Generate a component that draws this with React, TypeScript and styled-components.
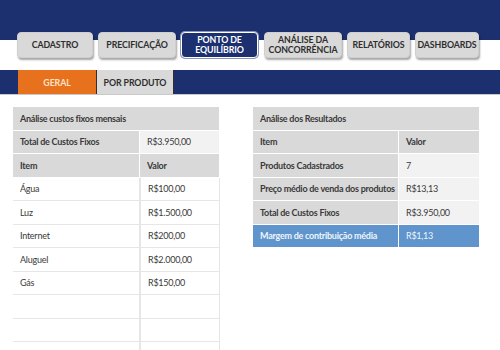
import React from 'react'
import styled, { createGlobalStyle } from 'styled-components'

const GlobalStyle = createGlobalStyle`
  * { box-sizing: border-box; }
  body {
    margin: 0;
    background: #fff;
    font-family: Lato, "Open Sans", "Liberation Sans", sans-serif;
    color: #3a3a3a;
  }
`

const NAVY = '#1c2f6f'

const Header = styled.header`
  height: 70px;
  background: linear-gradient(${NAVY} 0 40px, #fff 40px);
  padding: 32px 0 0 17px;
  display: flex;
  align-items: flex-start;
`

const MenuTab = styled.div<{ $w: number; $gap: number; $active?: boolean }>`
  width: ${p => p.$w}px;
  height: 26px;
  margin-right: ${p => p.$gap}px;
  border-radius: 4px;
  display: flex;
  align-items: center;
  justify-content: center;
  text-align: center;
  white-space: pre-line;
  font-size: 8.8px;
  font-weight: 700;
  letter-spacing: -0.1px;
  line-height: 10.5px;
  color: ${p => (p.$active ? '#fff' : '#2e2e2e')};
  background: ${p => (p.$active ? NAVY : '#d9d9d9')};
  border: 1px solid ${p => (p.$active ? '#fff' : '#cfcfcf')};
  box-shadow: ${p => (p.$active ? '0 0 0 1px #8a96b8' : '1px 2px 2px rgba(0,0,0,0.35)')};
`

const SubBar = styled.nav`
  height: 25px;
  background: ${NAVY};
  border-bottom: 1px solid #c9c9c9;
  padding-left: 18px;
  display: flex;
`

const SubTab = styled.div<{ $w: number; $orange?: boolean }>`
  width: ${p => p.$w}px;
  height: 24px;
  display: flex;
  align-items: center;
  justify-content: center;
  font-size: 8.8px;
  font-weight: 700;
  letter-spacing: -0.1px;
  color: ${p => (p.$orange ? '#fde2c8' : '#2e2e2e')};
  background: ${p => (p.$orange ? '#e8711d' : '#d9d9d9')};
  border-right: 1px solid #3a2a2a;
`

const Content = styled.main`
  display: flex;
  align-items: flex-start;
  padding: 12px 0 0 13px;
  gap: 33px;
`

const Table = styled.div<{ $w: number; $col: number }>`
  width: ${p => p.$w}px;
  display: grid;
  grid-template-columns: ${p => p.$col}px 1fr;
  grid-auto-rows: 23.5px;
  font-size: 9px;
  letter-spacing: -0.25px;
`

type Kind = 'head' | 'label' | 'light' | 'white' | 'blue'

const Cell = styled.div<{ $kind: Kind; $span?: boolean; $plain?: boolean }>`
  grid-column: ${p => (p.$span ? '1 / 3' : 'auto')};
  display: flex;
  align-items: center;
  padding-left: 7px;
  white-space: nowrap;
  font-weight: ${p =>
    !p.$plain && (p.$kind === 'head' || p.$kind === 'label' || p.$kind === 'blue') ? 700 : 400};
  background: ${p =>
    p.$kind === 'head' || p.$kind === 'label'
      ? '#d9d9d9'
      : p.$kind === 'light'
      ? '#f2f2f2'
      : p.$kind === 'blue'
      ? '#5f95cc'
      : '#fff'};
  color: ${p => (p.$kind === 'blue' ? '#eef4fb' : '#3a3a3a')};
  border-bottom: 1px solid ${p => (p.$kind === 'white' ? '#e6e6e6' : '#fff')};
  border-right: 1px solid ${p => (p.$kind === 'white' ? '#e6e6e6' : '#fff')};
  &:nth-child(odd) {
    border-left: ${p => (p.$kind === 'white' ? '1px solid #e6e6e6' : 'none')};
  }
`

const menu = [
  { label: 'CADASTRO', w: 76, gap: 5 },
  { label: 'PRECIFICAÇÃO', w: 78, gap: 5 },
  { label: 'PONTO DE\nEQUILÍBRIO', w: 77, gap: 6, active: true },
  { label: 'ANÁLISE DA\nCONCORRÊNCIA', w: 78, gap: 5 },
  { label: 'RELATÓRIOS', w: 63, gap: 5 },
  { label: 'DASHBOARDS', w: 64, gap: 0 },
]

const costs: [string, string][] = [
  ['Água', 'R$100,00'],
  ['Luz', 'R$1.500,00'],
  ['Internet', 'R$200,00'],
  ['Aluguel', 'R$2.000,00'],
  ['Gás', 'R$150,00'],
  ['', ''],
  ['', ''],
  ['', ''],
]

const results: [string, string][] = [
  ['Produtos Cadastrados', '7'],
  ['Preço médio de venda dos produtos', 'R$13,13'],
  ['Total de Custos Fixos', 'R$3.950,00'],
]

const App = () => {
  return (
    <>
      <GlobalStyle />
      <Header>
        {menu.map(m => (
          <MenuTab key={m.label} $w={m.w} $gap={m.gap} $active={m.active}>
            {m.label}
          </MenuTab>
        ))}
      </Header>
      <SubBar>
        <SubTab $w={79} $orange>GERAL</SubTab>
        <SubTab $w={77}>POR PRODUTO</SubTab>
      </SubBar>
      <Content>
        <Table $w={207} $col={127}>
          <Cell $kind="head" $span>Análise custos fixos mensais</Cell>
          <Cell $kind="label">Total de Custos Fixos</Cell>
          <Cell $kind="light">R$3.950,00</Cell>
          <Cell $kind="label">Item</Cell>
          <Cell $kind="label">Valor</Cell>
          {costs.map(([item, val], i) => (
            <React.Fragment key={i}>
              <Cell $kind="white">{item}</Cell>
              <Cell $kind="white">{val}</Cell>
            </React.Fragment>
          ))}
        </Table>
        <Table $w={227} $col={146}>
          <Cell $kind="head" $span>Análise dos Resultados</Cell>
          <Cell $kind="label">Item</Cell>
          <Cell $kind="label">Valor</Cell>
          {results.map(([item, val]) => (
            <React.Fragment key={item}>
              <Cell $kind="label">{item}</Cell>
              <Cell $kind="light">{val}</Cell>
            </React.Fragment>
          ))}
          <Cell $kind="blue">Margem de contribuição média</Cell>
          <Cell $kind="blue" $plain>R$1,13</Cell>
        </Table>
      </Content>
    </>
  )
}

export default App
